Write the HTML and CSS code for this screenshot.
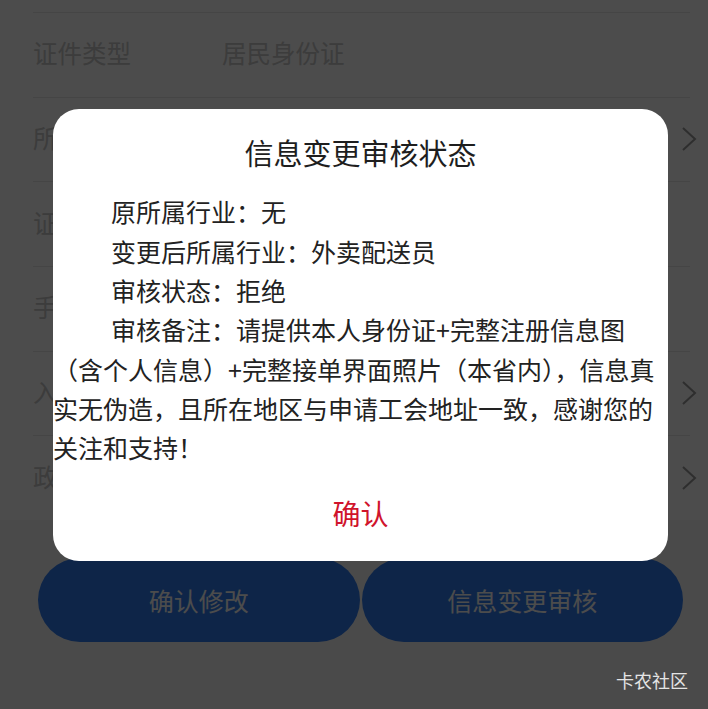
FILE: index.html
```html
<!DOCTYPE html>
<html lang="zh-CN">
<head>
<meta charset="utf-8">
<title>信息变更审核状态</title>
<link rel="stylesheet" href="styles.css">
</head>
<body>
<div class="page">
  <div class="list">
    <div class="row"><span class="label">证件类型</span><span class="value">居民身份证</span></div>
    <div class="row"><span class="label">所属行业</span><span class="value"></span><svg class="chev" viewBox="0 0 16 26"><path d="M2 2 L14 13 L2 24"/></svg></div>
    <div class="row"><span class="label">证件号码</span><span class="value"></span></div>
    <div class="row"><span class="label">手机号码</span><span class="value"></span></div>
    <div class="row"><span class="label">入会时间</span><span class="value"></span><svg class="chev" viewBox="0 0 16 26"><path d="M2 2 L14 13 L2 24"/></svg></div>
    <div class="row"><span class="label">政治面貌</span><span class="value"></span><svg class="chev" viewBox="0 0 16 26"><path d="M2 2 L14 13 L2 24"/></svg></div>
  </div>
  <div class="actions">
    <button class="btn">确认修改</button>
    <button class="btn">信息变更审核</button>
  </div>
</div>

<div class="mask"></div>

<div class="dialog">
  <div class="dialog-title">信息变更审核状态</div>
  <div class="dialog-body">
    <p class="para">原所属行业：无</p>
    <p class="para">变更后所属行业：外卖配送员</p>
    <p class="para">审核状态：拒绝</p>
    <p class="para">审核备注：请提供本人身份证+完整注册信息图（含个人信息）+完整接单界面照片（本省内），信息真实无伪造，且所在地区与申请工会地址一致，感谢您的关注和支持！</p>
  </div>
  <button class="dialog-confirm">确认</button>
</div>

<div class="watermark">卡农社区</div>
</body>
</html>
```

FILE: styles.css
```css
html, body {
  margin: 0;
  padding: 0;
}
body {
  width: 708px;
  height: 709px;
  overflow: hidden;
  background: #f8f8f8;
  font-family: "Noto Sans CJK SC", "Noto Sans", sans-serif;
  position: relative;
}
.page {
  display: flex;
  flex-direction: column;
}
.list {
  background: #ffffff;
  padding-top: 12px;
  display: flex;
  flex-direction: column;
}
.row {
  height: 84.67px;
  box-sizing: border-box;
  border-top: 1px solid #e8e8e8;
  margin: 0 18px 0 33px;
  display: flex;
  align-items: center;
  position: relative;
}
.label {
  width: 189px;
  font-size: 24.5px;
  line-height: 34px;
  margin-top: -3px;
  color: #c8c8c8;
}
.value {
  flex: 1;
  font-size: 24.5px;
  line-height: 34px;
  margin-top: -3px;
  color: #c8c8c8;
}
.chev {
  width: 16px;
  height: 26px;
  margin-right: -7px;
  fill: none;
  stroke: #9a9a9a;
  stroke-width: 2;
}
.actions {
  display: flex;
  gap: 2px;
  padding: 0 25px 0 38px;
  margin-top: 38px;
}
.btn {
  flex: 1;
  height: 84px;
  border: none;
  border-radius: 42px;
  background: #307cf0;
  color: #ffffff;
  font-family: "Noto Sans CJK SC", "Noto Sans", sans-serif;
  font-size: 25px;
  padding: 0;
}
.mask {
  position: absolute;
  inset: 0;
  background: rgba(0, 0, 0, 0.7);
}
.dialog {
  position: absolute;
  left: 53px;
  top: 109px;
  width: 615px;
  height: 452px;
  background: #ffffff;
  border-radius: 26px;
  display: flex;
  flex-direction: column;
}
.dialog-title {
  padding-top: 23px;
  line-height: 40px;
  font-size: 29px;
  color: #1e1e1e;
  text-align: center;
}
.dialog-body {
  margin-top: 20.3px;
  font-size: 25px;
  line-height: 39.33px;
  color: #222222;
}
.para {
  margin: 0;
  text-indent: 58px;
}
.dialog-confirm {
  flex: 1;
  border: none;
  background: transparent;
  padding: 0 0 2px 0;
  font-family: "Noto Sans CJK SC", "Noto Sans", sans-serif;
  font-size: 28px;
  color: #d0142c;
}
.watermark {
  position: absolute;
  right: 20px;
  top: 667px;
  font-size: 18px;
  line-height: 26px;
  color: #e4e4e4;
}
```
